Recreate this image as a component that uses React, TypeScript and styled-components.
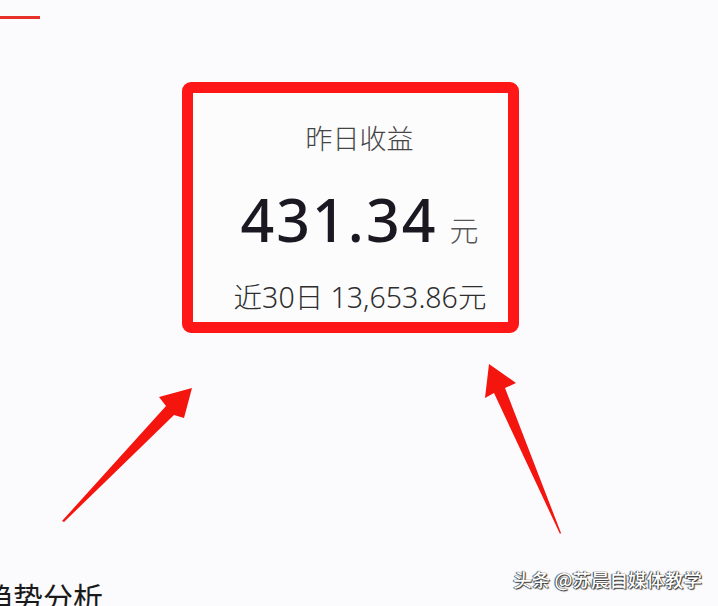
import React from "react";
import styled, { createGlobalStyle } from "styled-components";

const GlobalStyle = createGlobalStyle`
  html, body {
    margin: 0;
    padding: 0;
    background: #fbfbfd;
  }
  body {
    font-family: "Noto Sans", "Noto Sans CJK SC", sans-serif;
  }
`;

const Page = styled.div`
  position: relative;
  width: 718px;
  height: 606px;
  overflow: hidden;
  background: #fbfbfd;
  display: flex;
  flex-direction: column;
`;

const AccentLine = styled.div`
  width: 40px;
  height: 3px;
  margin-top: 16px;
  background: #e8302a;
`;

const Card = styled.div`
  box-sizing: border-box;
  width: 337px;
  height: 251px;
  margin: 63px 0 0 182px;
  border: 11px solid #ff1616;
  border-radius: 9px;
  background: #fcfcfd;
  display: flex;
  flex-direction: column;
  align-items: center;
  padding-top: 30px;
`;

const Title = styled.div`
  font-family: "Noto Sans CJK SC", sans-serif;
  font-weight: 300;
  font-size: 27px;
  line-height: 30px;
  color: #444;
  margin-left: 18px;
`;

const AmountRow = styled.div`
  display: flex;
  align-items: baseline;
  margin-top: 38px;
  margin-left: 18px;
`;

const Amount = styled.span`
  font-family: "Noto Sans", sans-serif;
  font-weight: 500;
  font-size: 59px;
  line-height: 56px;
  letter-spacing: 2px;
  color: #1c1822;
`;

const Unit = styled.span<{ $size: number }>`
  font-family: "Noto Sans CJK SC", sans-serif;
  font-weight: 300;
  font-size: ${(p) => p.$size}px;
  color: #555;
  margin-left: 12px;
`;

const Summary = styled.div`
  margin-top: 32px;
  font-family: "Noto Sans", "Noto Sans CJK SC", sans-serif;
  font-weight: 300;
  font-size: 28.5px;
  line-height: 30px;
  color: #2e2e2e;
  margin-left: 19px;
`;

const Heading = styled.div`
  margin-top: auto;
  margin-left: -17px;
  margin-bottom: -8px;
  font-family: "Noto Sans CJK SC", sans-serif;
  font-weight: 400;
  font-size: 30px;
  line-height: 36px;
  color: #1a1a1a;
`;

const Arrows = styled.svg`
  position: absolute;
  left: 0;
  top: 0;
  pointer-events: none;
`;

const Watermark = styled.div`
  position: absolute;
  right: 16px;
  bottom: 17px;
  font-family: "Noto Sans CJK SC", sans-serif;
  font-weight: 500;
  font-size: 18.5px;
  line-height: 20px;
  color: #fff;
  text-shadow: 0 0 1px #222, 1px 1px 1px #333, -1px 0 1px #555;
`;

export default function App() {
  return (
    <>
      <GlobalStyle />
      <Page>
        <AccentLine />
        <Card>
          <Title>昨日收益</Title>
          <AmountRow>
            <Amount>431.34</Amount>
            <Unit $size={29}>元</Unit>
          </AmountRow>
          <Summary>近30日 13,653.86元</Summary>
        </Card>
        <Heading>趋势分析</Heading>
        <Arrows width="718" height="606" viewBox="0 0 718 606">
          <polygon
            points="192,388 159,397 166,406 62,521 64,522 174,415 184,418"
            fill="#f5150f"
          />
          <polygon
            points="489,364 485,398 494,393 560,534 561,533 505,388 516,383"
            fill="#f5150f"
          />
        </Arrows>
        <Watermark>头条 @苏晨自媒体教学</Watermark>
      </Page>
    </>
  );
}
